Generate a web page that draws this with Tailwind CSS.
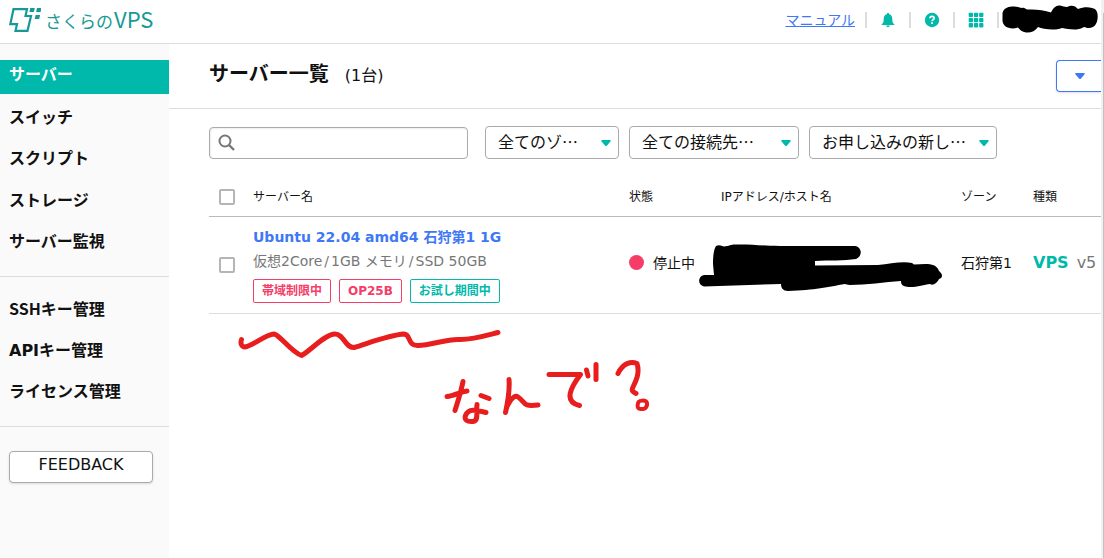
<!DOCTYPE html>
<html lang="ja">
<head>
<meta charset="utf-8">
<title>さくらのVPS サーバー一覧</title>
<script src="https://cdn.jsdelivr.net/npm/@tailwindcss/browser@4"></script>
</head>
<body class="relative flex min-h-screen overflow-x-hidden bg-white font-['DejaVu_Sans','Noto_Sans_CJK_JP',sans-serif] text-sm text-[#111]">
<div class="flex min-w-0 flex-1 flex-col">
  <header class="flex h-11 items-center justify-between border-b border-[#ddd] pr-[102px] pl-[9px]">
    <a href="#" class="flex items-center gap-1 pb-1 font-['Noto_Sans_CJK_JP',sans-serif] text-[#159a96]">
      <svg class="h-6 w-8" viewBox="0 0 32 24" fill="none" aria-hidden="true">
        <path d="M4.500 1.200H18L16.500 8H22L18.500 22.800H6.500L8 16.200H1.300Z" stroke="currentColor" stroke-width="2.200"/>
        <path d="M21.300 0h4.500l-.9 4h-4.500zM28 0h4.500l-.9 4h-4.500zM26.600 7h4.500l-.9 4h-4.500z" fill="currentColor"/>
      </svg>
      <span class="flex items-baseline leading-6"><span class="text-[17px]">さくらの</span><span class="ml-px text-[22px]">VPS</span></span>
    </a>
    <nav class="flex items-center pb-1">
      <a href="#" class="mr-[10px] text-[#3f78f5] underline">マニュアル</a>
      <span class="h-4 w-[2px] bg-[#ddd]"></span>
      <button class="flex w-[42px] justify-center text-[#00b9ab]" aria-label="お知らせ">
        <svg class="size-4" viewBox="0 0 16 16" fill="currentColor"><path d="M8 1c-.8 0-1.100.5-1.100 1.300C4.600 2.800 3.700 4.700 3.700 6.900c0 3-.6 4.300-2 5.300v.8h12.600v-.8c-1.400-1-2-2.300-2-5.300 0-2.200-.9-4.100-3.200-4.600C9.100 1.500 8.800 1 8 1zM6.300 13.600h3.400c0 1-.7 1.700-1.700 1.700s-1.700-.7-1.700-1.700z"/></svg>
      </button>
      <span class="h-4 w-[2px] bg-[#ddd]"></span>
      <button class="flex w-[42px] justify-center text-[#00b9ab]" aria-label="ヘルプ">
        <svg class="size-4" viewBox="0 0 16 16"><circle cx="8" cy="8" r="7.200" fill="currentColor"/><path d="M5.900 6.300C6 4.900 6.900 4.400 8 4.400c1.300 0 2.200.7 2.200 1.800C10.200 7.600 8.100 7.500 8.100 9.300" fill="none" stroke="#fff" stroke-width="1.700"/><path d="M7.200 10.300H9V12H7.200z" fill="#fff"/></svg>
      </button>
      <span class="h-4 w-[2px] bg-[#ddd]"></span>
      <button class="flex w-[42px] justify-center text-[#00b9ab]" aria-label="サービス一覧">
        <svg class="size-4" viewBox="0 0 16 16" fill="currentColor"><rect x=".7" y=".7" width="4.300" height="4.300" rx=".8"/><rect x="5.900" y=".7" width="4.300" height="4.300" rx=".8"/><rect x="11.100" y=".7" width="4.300" height="4.300" rx=".8"/><rect x=".7" y="5.900" width="4.300" height="4.300" rx=".8"/><rect x="5.900" y="5.900" width="4.300" height="4.300" rx=".8"/><rect x="11.100" y="5.900" width="4.300" height="4.300" rx=".8"/><rect x=".7" y="11.100" width="4.300" height="4.300" rx=".8"/><rect x="5.900" y="11.100" width="4.300" height="4.300" rx=".8"/><rect x="11.100" y="11.100" width="4.300" height="4.300" rx=".8"/></svg>
      </button>
      <span class="h-4 w-[2px] bg-[#ddd]"></span>
    </nav>
  </header>

  <div class="flex flex-1">
    <aside class="w-[169px] shrink-0 bg-[#fafafa] pt-4 text-base font-bold">
      <nav>
        <a href="#" class="mb-2 flex h-[34px] items-center bg-[#00b9ab] px-[9px] pb-1 text-white">サーバー</a>
        <ul class="border-b border-[#ddd] pb-[14px] pl-[9px] leading-[25px]">
          <li class="flex h-[41px] items-start pt-[3px]"><a href="#">スイッチ</a></li>
          <li class="flex h-[42px] items-start pt-[3px]"><a href="#">スクリプト</a></li>
          <li class="flex h-[41px] items-start pt-[3px]"><a href="#">ストレージ</a></li>
          <li class="flex h-[36px] items-start pt-[3px]"><a href="#">サーバー監視</a></li>
        </ul>
        <ul class="border-b border-[#ddd] pt-4 pb-[14px] pl-[9px] leading-[25px]">
          <li class="flex h-[42px] items-start pt-[3px]"><a href="#" class="font-['Noto_Sans_CJK_JP',sans-serif]">SSHキー管理</a></li>
          <li class="flex h-[41px] items-start pt-[3px]"><a href="#">APIキー管理</a></li>
          <li class="flex h-[36px] items-start pt-[3px]"><a href="#">ライセンス管理</a></li>
        </ul>
      </nav>
      <button class="mt-6 ml-[9px] h-8 w-36 rounded border border-[#aaa] bg-white pb-1 leading-6 font-normal shadow-sm">FEEDBACK</button>
    </aside>

    <main class="min-w-0 flex-1 overflow-hidden">
      <div class="flex h-[65px] items-start justify-between border-b border-[#ddd] pt-4 pl-10">
        <h1 class="flex items-baseline gap-4 text-xl leading-7 font-bold">サーバー一覧<span class="text-base font-normal">(1台)</span></h1>
        <button class="flex h-8 w-[45px] items-center overflow-hidden rounded-l border border-r-0 border-[#3f78f5] pb-px pl-[18px] text-[#3f78f5] shadow-sm" aria-label="操作メニュー">
          <svg class="h-[6px] w-[10px] shrink-0" viewBox="0 0 10 6" fill="currentColor"><path d="M.5 0h9Q10 1 9 2L6 5.500Q5 6.500 4 5.500L1 2Q0 1 .5 0z"/></svg>
        </button>
      </div>

      <div class="flex items-end pt-[17px] pl-10 font-['Noto_Sans_CJK_JP',sans-serif] text-base">
        <label class="mr-[17px] flex h-8 w-[259px] items-center rounded border border-[#aaa] bg-white px-2 shadow-[inset_1px_1px_2px_#eee]">
          <svg class="size-[18px] shrink-0" viewBox="0 0 18 18" fill="none" stroke="#777" aria-hidden="true"><circle cx="7" cy="7" r="5.500" stroke-width="2"/><path d="M11 11l5 5" stroke-width="2.400"/></svg>
          <input type="search" aria-label="サーバーを検索" class="min-w-0 flex-1 bg-transparent px-2 outline-none">
        </label>
        <div class="relative mr-[10px] w-[134px]">
          <select aria-label="ゾーン" class="h-[33px] w-full appearance-none rounded border border-[#aaa] bg-white pb-1 pl-3"><option>全てのゾ…</option></select>
          <svg class="pointer-events-none absolute top-[14px] right-2 h-[6px] w-[10px] text-[#00b9ab]" viewBox="0 0 10 6" fill="currentColor"><path d="M.5 0h9Q10 1 9 2L6 5.500Q5 6.500 4 5.500L1 2Q0 1 .5 0z"/></svg>
        </div>
        <div class="relative mr-[10px] w-[170px]">
          <select aria-label="接続先" class="h-[33px] w-full appearance-none rounded border border-[#aaa] bg-white pb-1 pl-3"><option>全ての接続先…</option></select>
          <svg class="pointer-events-none absolute top-[14px] right-2 h-[6px] w-[10px] text-[#00b9ab]" viewBox="0 0 10 6" fill="currentColor"><path d="M.5 0h9Q10 1 9 2L6 5.500Q5 6.500 4 5.500L1 2Q0 1 .5 0z"/></svg>
        </div>
        <div class="relative w-[188px]">
          <select aria-label="並び順" class="h-[33px] w-full appearance-none rounded border border-[#aaa] bg-white pb-1 pl-3"><option>お申し込みの新し…</option></select>
          <svg class="pointer-events-none absolute top-[14px] right-2 h-[6px] w-[10px] text-[#00b9ab]" viewBox="0 0 10 6" fill="currentColor"><path d="M.5 0h9Q10 1 9 2L6 5.500Q5 6.500 4 5.500L1 2Q0 1 .5 0z"/></svg>
        </div>
      </div>

      <div class="pt-[19px] pl-10">
        <table class="w-full table-fixed border-collapse text-left whitespace-nowrap">
          <colgroup><col class="w-11"><col class="w-[376px]"><col class="w-[92px]"><col class="w-60"><col class="w-[72px]"><col></colgroup>
          <thead>
            <tr class="h-[38px] border-b border-[#bbb] text-xs">
              <th class="pl-[10px]"><input type="checkbox" aria-label="すべて選択" class="block size-4 appearance-none rounded-xs border-2 border-[#b5b5b5] bg-white"></th>
              <th class="font-normal">サーバー名</th>
              <th class="font-normal">状態</th>
              <th class="font-normal">IPアドレス/ホスト名</th>
              <th class="font-normal">ゾーン</th>
              <th class="font-normal">種類</th>
            </tr>
          </thead>
          <tbody>
            <tr class="h-[97px] border-b border-[#ddd]">
              <td class="pl-[10px]"><input type="checkbox" aria-label="Ubuntu 22.04を選択" class="block size-4 appearance-none rounded-xs border-2 border-[#b5b5b5] bg-white"></td>
              <td class="pb-[2px]">
                <a href="#" class="block leading-6 font-bold text-[#3f78f5]">Ubuntu 22.04 amd64 石狩第1 1G</a>
                <p class="flex gap-[2px] leading-6 text-[#777]"><span>仮想2Core</span><span>/</span><span>1GB メモリ</span><span>/</span><span>SSD 50GB</span></p>
                <div class="mt-[6px] flex gap-2 text-xs leading-[22px] font-bold">
                  <span class="rounded-xs border border-[#f63d68] px-2 text-[#f63d68]">帯域制限中</span>
                  <span class="rounded-xs border border-[#f63d68] px-2 text-[#f63d68]">OP25B</span>
                  <span class="rounded-xs border border-[#00b9ab] px-2 text-[#00b9ab]">お試し期間中</span>
                </div>
              </td>
              <td class="pb-1"><span class="flex items-center gap-[9px]"><span class="size-[15px] rounded-full bg-[#f63d68]"></span>停止中</span></td>
              <td></td>
              <td class="pb-1">石狩第1</td>
              <td class="pb-1 text-base"><b class="text-[#00b9ab]">VPS</b><span class="ml-2 text-[#777]">v5</span></td>
            </tr>
          </tbody>
        </table>
      </div>
    </main>
  </div>
</div>

<div class="flex w-[3px] shrink-0 bg-[#f1f1f1] pt-[13px]" aria-hidden="true"><div class="ml-[2px] flex-1 bg-[#c1c1c1]"></div></div>

<!-- Freehand marker layer -->
<svg class="pointer-events-none absolute top-0 left-0 h-[558px] w-[1104px]" viewBox="0 0 1104 558" fill="none" stroke-linecap="round" stroke-linejoin="round" aria-hidden="true">
  <path fill="#000" d="M1002.500 15C1002 9 1008 6 1013 6.500C1017 6 1019 8 1022 8C1025 7 1026 10 1028 9.500C1035 9 1044 10 1051 12.500C1053 8 1056 5 1060 5.500C1063 6 1064 7 1067 7C1073 4 1076 7 1078 9C1083 7 1088 6.500 1092 8C1098 9 1098 15 1097.500 19C1097 24 1094 28 1089 28C1085 28 1085 26 1083 27.500C1077 31 1068 29 1062 28C1054 31 1043 29 1038 27C1035 31 1031 33 1026 32.500C1022 32 1020 30 1018 27.500C1010 30 1003 27 1002.500 21Z"/>
  <path fill="#000" d="M714 275L713 264C713 255 714 249 716 246C719 244 722 246 724 246.500C729 246 731 244.500 735 244.500C752 244 762 246 780 246H855C862 247 863 256 856 259C844 261 829 260 815 261V265.500L878 265C890 264 902 261 912 263L914 264.500C925 264 936 262 939 271C943 274 943 278 939 279C937 283 933 286 930 284C923 285 911 289 904 286C901 285 901 282 901 281C885 282 866 285 850 285C847 285 846 284 845 284C828 287 815 290 788 291C783 291 781 288 781 284L704 286.500C697 285 698 276 704 275Z"/>
  <g stroke="#e81e1e" stroke-width="5">
    <path d="M241.500 339.500C240 344 242 347 245 347C253 346 266 334 274 334C280 335 291 352 301.500 355.500C309 352 325 334 335 334C344 334 345 348 354 347.500C369 343 389 335 404 334C411 334 407 346 418 345.500C431 345 447 339 459 339.500C472 340 488 335 498 332.500"/>
    <path d="M447 396.500C454 396 460 392 467 391M463 381.500C461 392 458 401 455 410.500M481 395.500L489 398.500M477 404.500C476 412 479 421 473 421.500C467 422 464 420 465.500 415.500C469 407 479 411 486 412.500M509 379.500C510 391 508 401 505.500 412.500C507 403 514 394 518 397C526 402 521 407 538 405M549 374.500H580.500C571 387 563 402 579.500 405.500M586.500 370L588 376M596 364.500V379.500M618 373.500C623 363 631 361 637 363.500C640 373 636 381 633 387C631 391 633 392 636 393.500"/>
    <path d="M638 403.500C638 400 646 399.500 647 403C647.500 408 644 409.500 641 409C637.500 409 637 406 638 403.500" stroke-width="4"/>
  </g>
</svg>
</body>
</html>
